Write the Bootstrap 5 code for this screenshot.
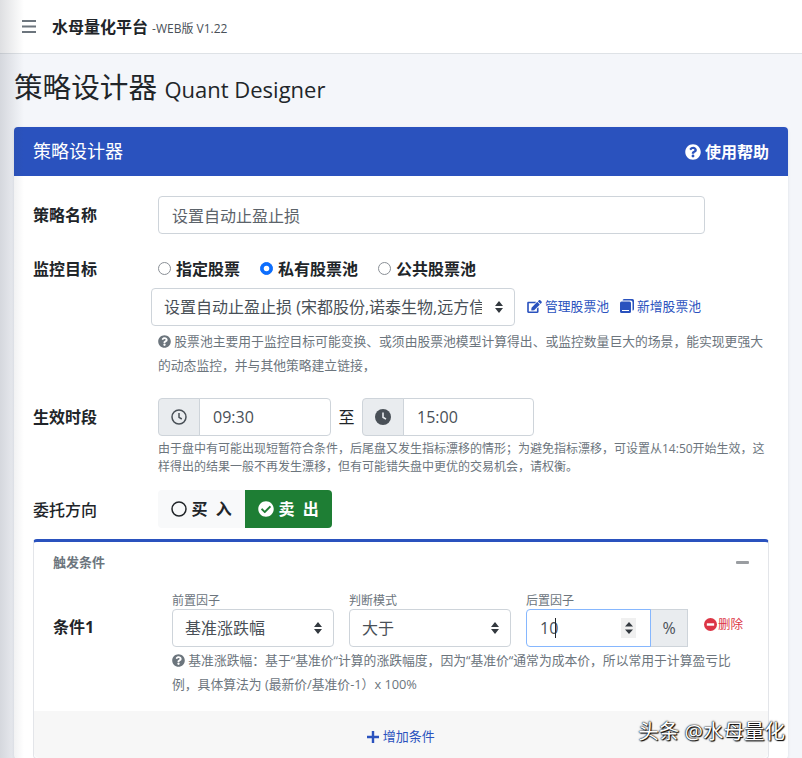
<!DOCTYPE html>
<html lang="zh-CN">
<head>
  <meta charset="UTF-8" />
  <meta name="viewport" content="width=device-width, initial-scale=1" />
  <title>策略设计器 | 水母量化平台</title>
  <link href="https://cdn.jsdelivr.net/npm/bootstrap@5.3.2/dist/css/bootstrap.min.css" rel="stylesheet" />
  <style>
    html, body { height: 100%; overflow: hidden; }
    body {
      background: #f4f6fa;
      font-family: "Open Sans", "Noto Sans CJK SC", sans-serif;
      font-size: 16px;
      color: #212529;
    }
    body::before {
      content: "";
      position: absolute;
      left: 0; top: 0; bottom: 0;
      width: 24px;
      background: linear-gradient(90deg, rgba(60,65,80,.17), rgba(60,65,80,0));
      z-index: 5;
      pointer-events: none;
    }
    svg { fill: currentColor; vertical-align: -2px; }

    .top-bar { height: 54px; background: #fff; border-bottom: 1px solid #dee2e6; padding: 0 0 0 22px; justify-content: flex-start; }
    .top-bar .brand { font-weight: 700; font-size: 16px; margin-left: 16px; color: #212529; }
    .top-bar small { font-size: 12px; font-weight: 400; color: #495057; margin-left: 4px; }
    .burger { color: #6c757d; line-height: 0; }

    .page-title { font-size: 28.6px; font-weight: 400; margin: 14px 0 19px 14px; line-height: 37px; }
    .page-title span { font-size: 22px; }

    .main-card { margin: 0 14px; border: 0; border-radius: 4px; box-shadow: 0 1px 3px rgba(40,50,70,.12); }
    .main-card > .card-header {
      height: 49px; background: #2a52be; color: #fff; border: 0;
      border-radius: 4px 4px 0 0; padding: 0 19px; font-size: 18px;
    }
    .help-link { font-size: 16px; font-weight: 700; }
    .main-card > .card-body { padding: 20px 19px 0; }

    .form-row { display: flex; }
    .form-row > .lbl { width: 125px; flex: none; font-weight: 600; line-height: 38px; }
    .form-row > .lbl.medium { font-weight: 500; height: 38px; line-height: 40px; }
    .form-control, .form-select, .input-group-text {
      height: 38px; font-size: 16px; border-color: #ced4da; border-radius: 4px; color: #5c636a;
    }
    .form-control { padding-left: 13px; }
    .form-select {
      padding-left: 12px; color: #495057;
      background-image: url("data:image/svg+xml,%3Csvg xmlns='http://www.w3.org/2000/svg' viewBox='0 0 8 12'%3E%3Cpath fill='%23343a40' d='M4 0 8 5H0zM4 12 0 7h8z'/%3E%3C/svg%3E");
      background-size: 8px 12px;
      background-position: right 11px center;
    }
    .name-input { width: 547px; }
    .radios { height: 30px; margin-top: 5px; }
    .radios .form-check { margin: 0 20px 0 0; padding-left: 18px; min-height: 0; font-weight: 700; line-height: 28px; }
    .radios .form-check-input { width: 13px; height: 13px; margin: 7px 0 0 -18px; border-color: #8a8f96; }
    .radios .form-check-input:checked { border-color: #0d6efd; }

    .pool-row { margin: 0 0 0 -7px; height: 38px; }
    .pool-row .form-select { width: 364px; padding-right: 32px; }
    .pool-link { font-size: .8rem; color: #2a52be; text-decoration: none; white-space: nowrap; margin-left: 12px; }
    .pool-link + .pool-link { margin-left: 11px; }
    .pool-link svg { margin-right: 3px; }

    .hint { font-size: .8rem; color: #6c757d; }
    .hint.tall { line-height: 24px; }
    .hint.tight { font-size: .75rem; line-height: 18px; }
    .pool-hint { margin-top: 3px; }

    .time-row { margin-top: 21px; }
    .time-group { width: 173px; flex-wrap: nowrap; }
    .to-word + .time-group { width: 172px; }
    .time-group .input-group-text { width: 42px; padding: 0; justify-content: center; background: #e9ecef; color: #495057; }
    .time-group .form-control { color: #495057; padding-left: 13px; }
    .to-word { width: 31px; text-align: center; line-height: 38px; }

    .side-row { margin-top: 14px; }
    .side-btn { height: 38px; width: 87px; font-size: 16px; font-weight: 700; border-radius: 0; padding: 0; white-space: pre; }
    .side-buy { background: #f8f9fa; color: #212529; border: 0; border-radius: 4px 0 0 4px; font-weight: 600; }
    .side-sell { background: #1e7e34; color: #fff; border: 0; border-radius: 0 4px 4px 0; }

    .sub-card { margin-top: 11px; border: 1px solid #e3e5e9; border-top: 3px solid #2a52be; border-radius: 4px; }
    .sub-card > .card-header {
      background: #fff; border: 0; padding: 0 19px 4px; height: 45px; font-size: 13px; font-weight: 700; color: #6c757d;
    }
    .minus-bar { width: 13px; height: 3px; background: #9a9da1; border-radius: 1px; }
    .sub-card > .card-body { padding: 5px 19px 15px; }
    .cond-lbl { width: 119px; flex: none; font-weight: 700; padding-top: 16px; line-height: 38px; }
    .field { width: 162px; margin-right: 15px; }
    .field label { display: block; font-size: 12px; line-height: 17px; color: #6c757d; }
    .field.wide { width: 163px; }
    .field-num { flex-wrap: nowrap; }
    .field-num .form-control { width: 125px; flex: none; border-color: #86b7fe; color: #495057; }
    .field-num .input-group-text { width: 38px; padding: 0; justify-content: center; background: #e9ecef; color: #495057; }
    .num-wrap { position: relative; }
    .caret-line { position: absolute; left: 30px; top: 9px; width: 1px; height: 20px; background: #212529; z-index: 6; }
    .spin {
      position: absolute; left: 96px; top: 9px; width: 15px; height: 20px; background: #f0f0f0; z-index: 6;
      display: flex; align-items: center; justify-content: center; color: #343a40; line-height: 0;
    }
    .del-link { font-size: 12.5px; color: #dc3545; text-decoration: none; margin: 14px 0 0 0; white-space: nowrap; line-height: 38px; }
    .del-link svg { margin-right: 1px; }
    .cond-hint { margin: 1px 12px 0 119px; }
    .sub-card > .card-footer { height: 47px; padding-top: 10px; background: #f7f7f7; border: 0; font-size: 13px; line-height: 31px; }
    .sub-card > .card-footer a { color: #2a52be; text-decoration: none; }
    .watermark {
      position: absolute; right: 17px; top: 716px; font-size: 20.5px; color: #fff; z-index: 7;
      text-shadow: 0 0 2px #000, 1px 1px 1px #000, 0 0 1px #000;
    }
  </style>
</head>
<body>

<svg width="0" height="0" style="position:absolute">
  <symbol id="i-question" viewBox="0 0 512 512"><path d="M504 256c0 136.997-111.043 248-248 248S8 392.997 8 256C8 119.083 119.043 8 256 8s248 111.083 248 248zM262.655 90c-54.497 0-89.255 22.957-116.549 63.758-3.536 5.286-2.353 12.415 2.715 16.258l34.699 26.31c5.205 3.947 12.621 3.008 16.665-2.122 17.864-22.658 30.113-35.797 57.303-35.797 20.429 0 45.698 13.148 45.698 32.958 0 14.976-12.363 22.667-32.534 33.976C247.128 238.528 216 254.941 216 296v4c0 6.627 5.373 12 12 12h56c6.627 0 12-5.373 12-12v-1.333c0-28.462 83.186-29.647 83.186-106.667 0-58.002-60.165-102-116.531-102zM256 338c-25.365 0-46 20.635-46 46 0 25.364 20.635 46 46 46s46-20.636 46-46c0-25.365-20.635-46-46-46z"/></symbol>
  <symbol id="i-check" viewBox="0 0 512 512"><path d="M504 256c0 136.967-111.033 248-248 248S8 392.967 8 256 119.033 8 256 8s248 111.033 248 248zM227.314 387.314l184-184c6.248-6.248 6.248-16.379 0-22.627l-22.627-22.627c-6.248-6.249-16.379-6.249-22.628 0L216 308.118l-70.059-70.059c-6.248-6.248-16.379-6.248-22.628 0l-22.627 22.627c-6.248 6.248-6.248 16.379 0 22.627l104 104c6.249 6.249 16.379 6.249 22.628.001z" fill-rule="evenodd"/></symbol>
  <symbol id="i-edit" viewBox="0 0 576 512"><path d="M402.6 83.2l90.2 90.2c3.8 3.8 3.8 10 0 13.8L274.4 405.6l-92.8 10.3c-12.4 1.4-22.9-9.1-21.5-21.5l10.3-92.8L388.8 83.2c3.8-3.8 10-3.8 13.8 0zm162-22.9l-48.8-48.8c-15.2-15.2-39.9-15.2-55.2 0l-35.4 35.4c-3.8 3.8-3.8 10 0 13.8l90.2 90.2c3.8 3.8 10 3.8 13.8 0l35.4-35.4c15.2-15.3 15.2-40 0-55.2zM384 346.2V448H64V128h229.8c3.2 0 6.2-1.3 8.5-3.5l40-40c7.6-7.6 2.2-20.5-8.5-20.5H48C21.5 64 0 85.5 0 112v352c0 26.5 21.5 48 48 48h352c26.5 0 48-21.5 48-48V306.2c0-10.7-12.9-16-20.5-8.5l-40 40c-2.2 2.3-3.5 5.3-3.5 8.5z"/></symbol>
  <symbol id="i-copy" viewBox="0 0 14 14"><path d="M4 0h8.500A1.500 1.500 0 0 1 14 1.500V10a1.500 1.500 0 0 1-1.500 1.500V3.200A1.700 1.700 0 0 0 10.800 1.500H2.600A1.500 1.500 0 0 1 4 0z"/><path d="M1.500 2.500h8A1.500 1.500 0 0 1 11 4v8.500A1.500 1.500 0 0 1 9.500 14h-8A1.500 1.500 0 0 1 0 12.500V4a1.500 1.500 0 0 1 1.500-1.500zM2 11v1h7v-1z" fill-rule="evenodd"/></symbol>
</svg>

<nav class="navbar top-bar">
  <a class="burger" href="#">
    <svg width="14" height="13" viewBox="0 0 14 13"><rect width="14" height="2"/><rect y="5.500" width="14" height="2"/><rect y="11" width="14" height="2"/></svg>
  </a>
  <span class="brand">水母量化平台<small>-WEB版 V1.22</small></span>
</nav>

<h1 class="page-title">策略设计器 <span>Quant Designer</span></h1>

<div class="card main-card">
  <div class="card-header d-flex justify-content-between align-items-center">
    <span>策略设计器</span>
    <a class="help-link text-white text-decoration-none" href="#"><svg width="16" height="16"><use href="#i-question"/></svg> 使用帮助</a>
  </div>
  <div class="card-body">

    <div class="form-row mb-3">
      <div class="lbl">策略名称</div>
      <input type="text" class="form-control name-input" value="设置自动止盈止损" />
    </div>

    <div class="form-row">
      <div class="lbl">监控目标</div>
      <div class="d-flex radios">
        <div class="form-check"><input class="form-check-input" type="radio" name="target" id="t1" /><label for="t1">指定股票</label></div>
        <div class="form-check"><input class="form-check-input" type="radio" name="target" id="t2" checked /><label for="t2">私有股票池</label></div>
        <div class="form-check"><input class="form-check-input" type="radio" name="target" id="t3" /><label for="t3">公共股票池</label></div>
      </div>
    </div>
    <div class="form-row">
      <div class="lbl"></div>
      <div class="flex-grow-1">
        <div class="d-flex align-items-center pool-row">
          <select class="form-select"><option>设置自动止盈止损 (宋都股份,诺泰生物,远方信息)</option></select>
          <a class="pool-link" href="#"><svg width="15" height="13"><use href="#i-edit"/></svg>管理股票池</a>
          <a class="pool-link" href="#"><svg width="14" height="14"><use href="#i-copy"/></svg>新增股票池</a>
        </div>
        <div class="hint tall pool-hint"><svg width="13" height="13"><use href="#i-question"/></svg> 股票池主要用于监控目标可能变换、或须由股票池模型计算得出、或监控数量巨大的场景，能实现更强大的动态监控，并与其他策略建立链接，</div>
      </div>
    </div>

    <div class="form-row time-row">
      <div class="lbl">生效时段</div>
      <div class="flex-grow-1">
        <div class="d-flex">
          <div class="input-group time-group">
            <span class="input-group-text">
              <svg width="16" height="16" viewBox="0 0 16 16"><circle cx="8" cy="8" r="7" fill="none" stroke="currentColor" stroke-width="1.500"/><path d="M8 4v4.300l2.800 1.700" fill="none" stroke="currentColor" stroke-width="1.500"/></svg>
            </span>
            <input type="text" class="form-control" value="09:30" />
          </div>
          <div class="to-word">至</div>
          <div class="input-group time-group">
            <span class="input-group-text">
              <svg width="16" height="16" viewBox="0 0 16 16"><circle cx="8" cy="8" r="8"/><path d="M8 3.500v4.800l3 1.800" fill="none" stroke="#e9ecef" stroke-width="1.600"/></svg>
            </span>
            <input type="text" class="form-control" value="15:00" />
          </div>
        </div>
        <div class="hint tight mt-1">由于盘中有可能出现短暂符合条件，后尾盘又发生指标漂移的情形；为避免指标漂移，可设置从14:50开始生效，这样得出的结果一般不再发生漂移，但有可能错失盘中更优的交易机会，请权衡。</div>
      </div>
    </div>

    <div class="form-row side-row">
      <div class="lbl medium">委托方向</div>
      <div class="d-flex">
        <button type="button" class="btn side-btn side-buy"><svg width="16" height="16" viewBox="0 0 16 16"><circle cx="8" cy="8" r="7" fill="none" stroke="currentColor" stroke-width="1.500"/></svg> 买  入</button>
        <button type="button" class="btn side-btn side-sell"><svg width="16" height="16"><use href="#i-check"/></svg> 卖  出</button>
      </div>
    </div>

    <div class="card sub-card">
      <div class="card-header d-flex justify-content-between align-items-center">
        <span>触发条件</span>
        <span class="minus-bar"></span>
      </div>
      <div class="card-body">
        <div class="d-flex">
          <div class="cond-lbl">条件1</div>
          <div class="field">
            <label>前置因子</label>
            <select class="form-select"><option>基准涨跌幅</option></select>
          </div>
          <div class="field">
            <label>判断模式</label>
            <select class="form-select"><option>大于</option></select>
          </div>
          <div class="field wide">
            <label>后置因子</label>
            <div class="input-group field-num num-wrap">
              <input type="text" class="form-control" value="10" />
              <span class="input-group-text">%</span>
              <span class="caret-line"></span>
              <span class="spin"><svg width="8" height="14" viewBox="0 0 8 14"><path d="M4 1 8 5.500H0zM4 13 0 8.500h8z"/></svg></span>
            </div>
          </div>
          <a class="del-link" href="#"><svg width="13" height="13" viewBox="0 0 16 16"><circle cx="8" cy="8" r="8"/><rect x="3.500" y="6.500" width="9" height="3" fill="#fff"/></svg>删除</a>
        </div>
        <div class="hint tall cond-hint">
          <svg width="13" height="13"><use href="#i-question"/></svg> 基准涨跌幅：基于“基准价“计算的涨跌幅度，因为“基准价“通常为成本价，所以常用于计算盈亏比例，具体算法为 (最新价/基准价-1）x 100%
        </div>
      </div>
      <div class="card-footer text-center">
        <a href="#"><svg width="12" height="12" viewBox="0 0 12 12"><path d="M4.800 0h2.400v4.800H12v2.400H7.200V12H4.800V7.200H0V4.800h4.800z"/></svg> 增加条件</a>
      </div>
    </div>

  </div>
</div>

<div class="watermark">头条 @水母量化</div>

<script src="https://cdn.jsdelivr.net/npm/bootstrap@5.3.2/dist/js/bootstrap.bundle.min.js"></script>
</body>
</html>
